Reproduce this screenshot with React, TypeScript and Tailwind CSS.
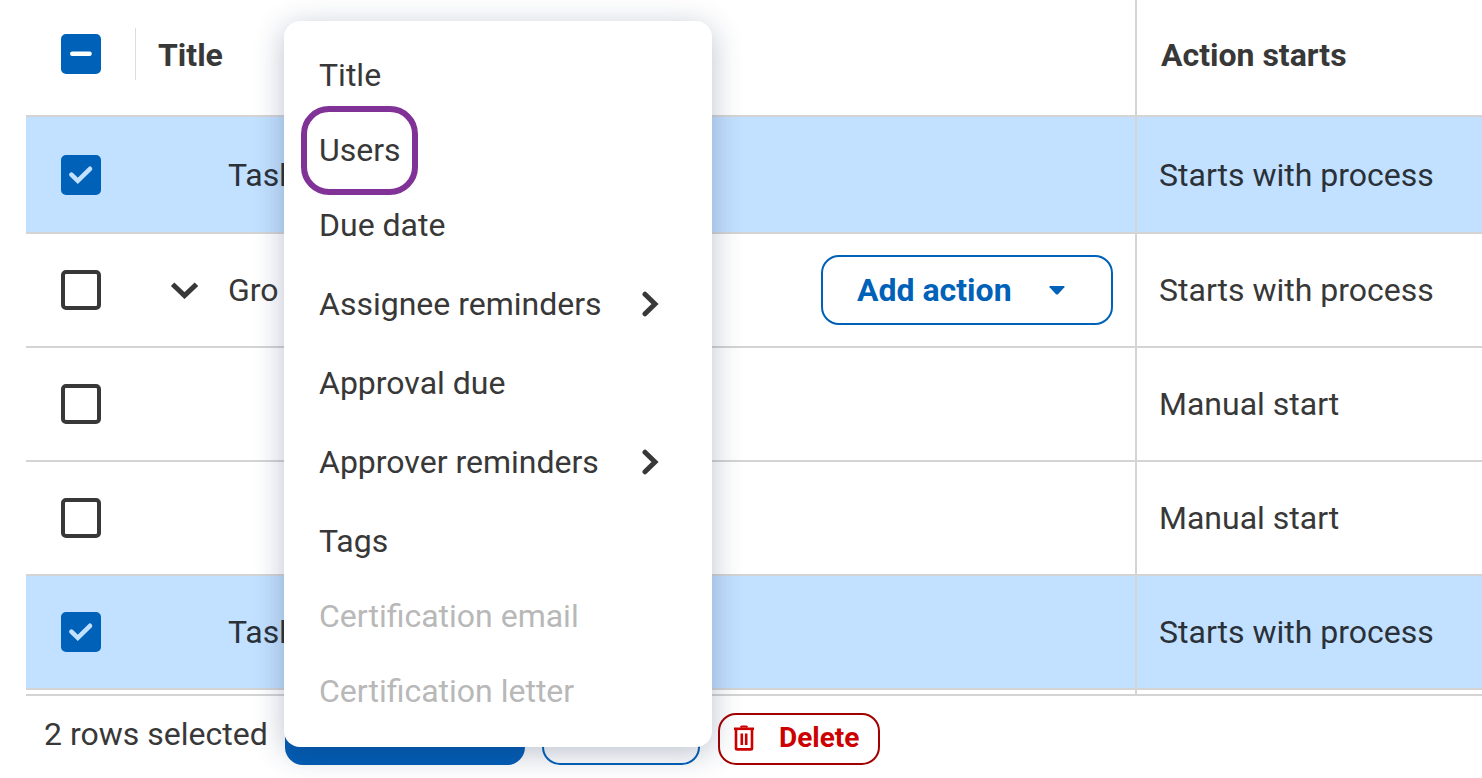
import { useState } from 'react';

type Row = {
  id: string;
  label?: string;
  starts: string;
  group?: boolean;
};

type MenuItem = {
  label: string;
  submenu?: boolean;
  disabled?: boolean;
  highlighted?: boolean;
};

const ROWS: Row[] = [
  { id: 'task-1', label: 'Task', starts: 'Starts with process' },
  { id: 'group-1', label: 'Gro', starts: 'Starts with process', group: true },
  { id: 'item-1', starts: 'Manual start' },
  { id: 'item-2', starts: 'Manual start' },
  { id: 'task-2', label: 'Task', starts: 'Starts with process' },
];

const MENU_ITEMS: MenuItem[] = [
  { label: 'Title' },
  { label: 'Users', highlighted: true },
  { label: 'Due date' },
  { label: 'Assignee reminders', submenu: true },
  { label: 'Approval due' },
  { label: 'Approver reminders', submenu: true },
  { label: 'Tags' },
  { label: 'Certification email', disabled: true },
  { label: 'Certification letter', disabled: true },
];

function Checkbox({
  label,
  checked,
  mixed,
  onChange,
}: {
  label: string;
  checked: boolean;
  mixed?: boolean;
  onChange: () => void;
}) {
  return (
    <label className="relative block size-10">
      <input
        type="checkbox"
        aria-label={label}
        checked={checked}
        onChange={onChange}
        className="block size-10 appearance-none rounded-[5px] border-4 border-[#383838] bg-white checked:border-[#0061b9] checked:bg-[#0061b9]"
      />
      {checked && (
        <svg viewBox="0 0 40 40" className="pointer-events-none absolute inset-0 size-10" fill="none" strokeLinecap="round">
          {mixed ? (
            <path d="M11.2 19.7H28.6" stroke="#fff" strokeWidth="4.4" />
          ) : (
            <path d="M10.4 19.6L16.8 25.8L29 13.8" stroke="#c2e0ff" strokeWidth="4.6" />
          )}
        </svg>
      )}
    </label>
  );
}

function TrashIcon() {
  return (
    <svg viewBox="0 0 22 26" className="h-[26px] w-[22px]" fill="none" stroke="#c00" strokeWidth="2">
      <path d="M1 3.8H21" strokeWidth="2.6" />
      <path d="M7.5 2.4L9 1.4H13L14.5 2.4" />
      <path d="M3 4V23.2Q3 24.4 4.2 24.4H17.8Q19 24.4 19 23.2V4" strokeWidth="2.6" />
      <path d="M8.8 8.4V20M13.2 8.4V20" strokeWidth="2.6" />
    </svg>
  );
}

function ActionMenu() {
  return (
    <div className="absolute left-[284px] top-[21px] w-[428px] rounded-2xl bg-white pb-[19px] pt-4 shadow-[0_6px_30px_rgba(30,50,90,0.3)]">
      {MENU_ITEMS.map((item) => (
        <button
          key={item.label}
          disabled={item.disabled}
          className={
            'flex w-full items-center justify-between pl-[35px] pr-[53px] text-left disabled:text-[#b8b8b8] ' +
            (item.submenu ? 'h-[83px]' : 'h-[75px]')
          }
        >
          <span className="relative">
            {item.label}
            {item.highlighted && (
              <span className="absolute -bottom-[25px] -left-[18px] -right-[17px] -top-6 rounded-[28px] border-6 border-[#803297]" />
            )}
          </span>
          {item.submenu && (
            <svg viewBox="0 0 18 26" className="h-[26px] w-[18px]" fill="none" stroke="#383838" strokeWidth="5" strokeLinecap="round">
              <path d="M4 3.2L14 13L4 22.8" />
            </svg>
          )}
        </button>
      ))}
    </div>
  );
}

export default function App() {
  const [selected, setSelected] = useState<string[]>(['task-1', 'task-2']);

  const toggle = (id: string) =>
    setSelected((prev) => (prev.includes(id) ? prev.filter((s) => s !== id) : [...prev, id]));

  const toggleAll = () => setSelected((prev) => (prev.length ? [] : ROWS.map((r) => r.id)));

  return (
    <div className="relative overflow-hidden bg-white pl-[26px] font-[Roboto,'Liberation_Sans',sans-serif] text-[32px] leading-10 text-[#383838]">
      <table className="w-full table-fixed border-separate border-spacing-0">
        <colgroup>
          <col className="w-[110px]" />
          <col />
          <col className="w-[347px]" />
        </colgroup>
        <thead>
          <tr className="h-[117px] text-left">
            <th className="border-b-2 border-[#d4d4d4] pb-2 pl-[35px]">
              <div className="flex h-[52px] items-center border-r border-[#dcdcdc]">
                <Checkbox
                  label="Select all rows"
                  checked={selected.length > 0}
                  mixed={selected.length < ROWS.length}
                  onChange={toggleAll}
                />
              </div>
            </th>
            <th className="border-b-2 border-[#d4d4d4] pb-1.5 pl-[22px] font-bold">Title</th>
            <th className="border-b-2 border-l-2 border-[#d4d4d4] pb-1.5 pl-6 font-bold">Action starts</th>
          </tr>
        </thead>
        <tbody>
          {ROWS.map((row) => {
            const isSelected = selected.includes(row.id);
            return (
              <tr
                key={row.id}
                className={'h-[114px] first:h-[117px] ' + (isSelected ? 'bg-[#c2e0ff] text-[#2a3138]' : 'bg-white')}
              >
                <td className="border-b-2 border-[#d4d4d4] pl-[35px]">
                  <Checkbox
                    label={`Select ${row.label ?? row.id}`}
                    checked={isSelected}
                    onChange={() => toggle(row.id)}
                  />
                </td>
                <td className="border-b-2 border-[#d4d4d4] pr-[22px]">
                  <div className="flex items-center">
                    <div className="flex w-[92px] shrink-0 items-center pl-[34px]">
                      {row.group && (
                        <button aria-label="Collapse group">
                          <svg viewBox="0 0 28 18" className="block h-[18px] w-7" fill="none" stroke="#383838" strokeWidth="5">
                            <path d="M2.6 3.2L14.5 14.6L26.4 3.2" />
                          </svg>
                        </button>
                      )}
                    </div>
                    <span>{row.label}</span>
                    {row.group && (
                      <button className="ml-auto flex h-[70px] w-[292px] items-center justify-between rounded-[18px] border-2 border-[#0061b9] bg-white pl-[34px] pr-[46px] font-bold text-[#0061b9]">
                        Add action
                        <svg viewBox="0 0 16 9" className="h-[9px] w-4" fill="#0061b9">
                          <path d="M1 0H15Q16 .4 15.4 1.2L9 8.2Q8 9 7 8.2L.6 1.2Q0 .4 1 0Z" />
                        </svg>
                      </button>
                    )}
                  </div>
                </td>
                <td className="border-b-2 border-l-2 border-[#d4d4d4] pl-[22px]">{row.starts}</td>
              </tr>
            );
          })}
          <tr className="h-1">
            <td />
            <td />
            <td className="border-l-2 border-[#d4d4d4]" />
          </tr>
        </tbody>
      </table>

      <footer className="flex border-t-2 border-[#d4d4d4] pb-[13px] pl-[18px] pt-[17px] text-[28px] font-bold">
        <span className="w-[241px] shrink-0 pt-px text-[32px] font-normal">{selected.length} rows selected</span>
        <button className="h-[52px] w-60 rounded-[18px] bg-[#005db5] pb-1 pl-9 text-left text-white">Bulk edit</button>
        <button className="ml-[17px] h-[52px] w-[158px] rounded-[18px] border-2 border-[#0061b9] pb-1 text-[#0061b9]">
          Clone
        </button>
        <button className="ml-[18px] flex h-[52px] w-[162px] items-center rounded-[18px] border-2 border-[#a30000] pb-0.5 pl-[13px] text-[#c00]">
          <TrashIcon />
          <span className="ml-6">Delete</span>
        </button>
      </footer>

      <ActionMenu />
    </div>
  );
}
